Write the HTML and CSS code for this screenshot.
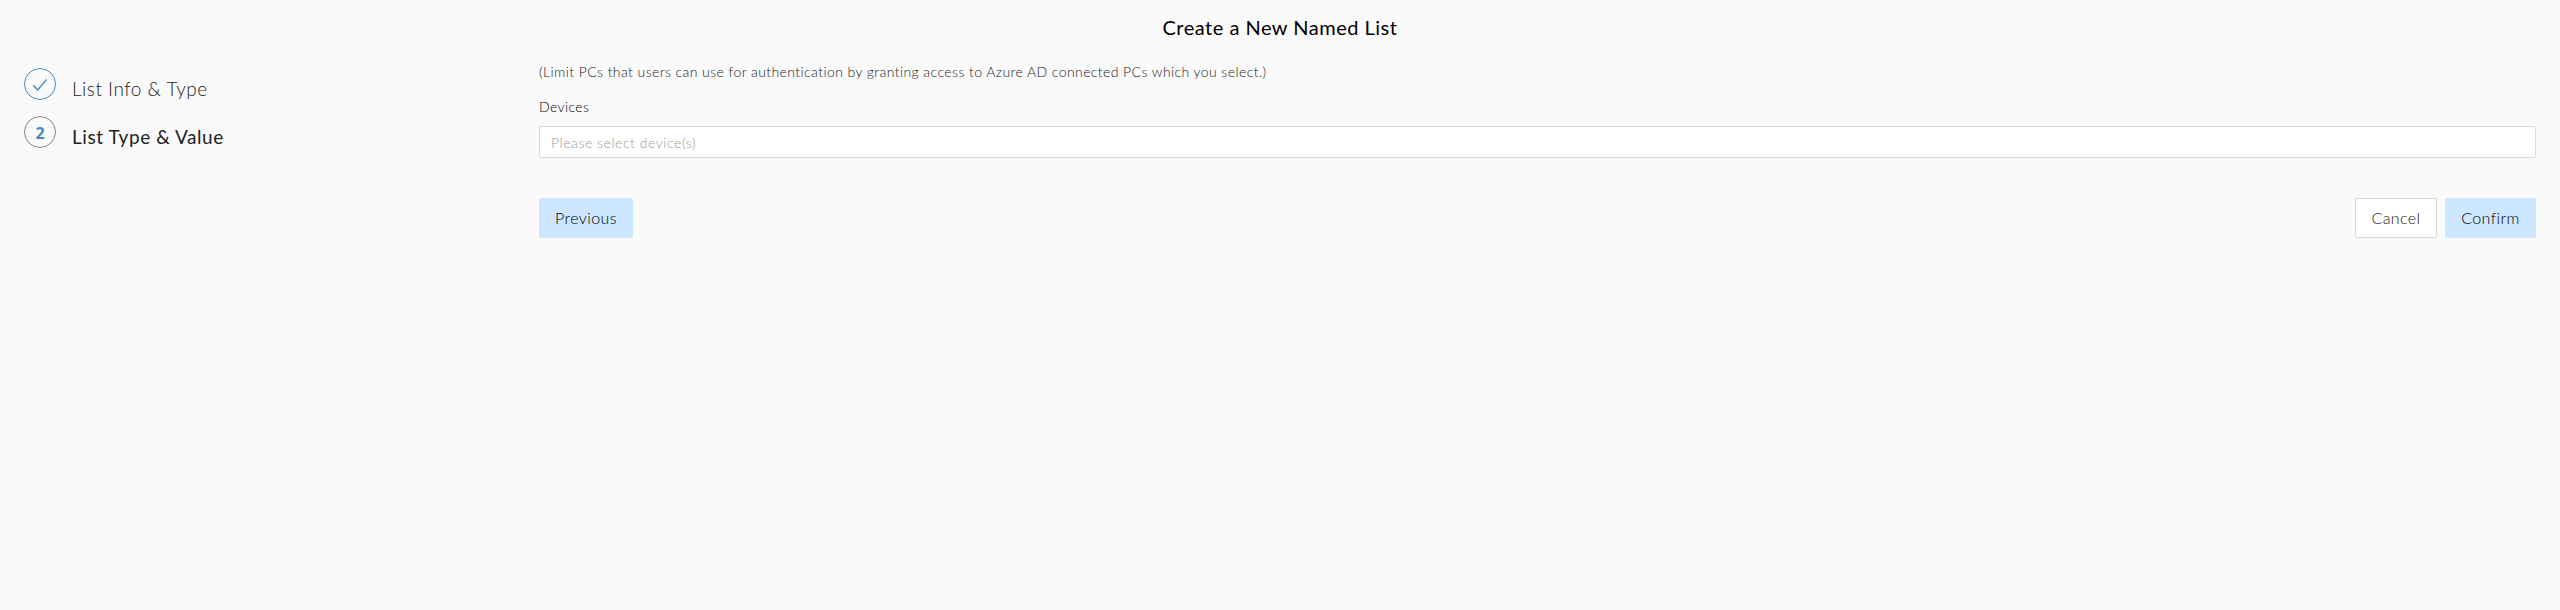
FILE: index.html
```html
<!DOCTYPE html>
<html lang="en">
<head>
<meta charset="utf-8">
<title>Create a New Named List</title>
<link rel="stylesheet" href="styles.css">
</head>
<body>
<h1 class="title"><span>Create a New Named List</span></h1>
<div class="layout">
  <ol class="steps">
    <li class="step step-done">
      <span class="marker"><svg width="16" height="14" viewBox="0 0 16 14"><path d="M1.2 7.2 5.7 12 14.6 1.4" fill="none" stroke="currentColor" stroke-width="1.4"/></svg></span>
      <span class="step-label">List Info &amp; Type</span>
    </li>
    <li class="step step-active">
      <span class="marker">2</span>
      <span class="step-label">List Type &amp; Value</span>
    </li>
  </ol>
  <main class="form">
    <p class="hint"><span>(Limit PCs that users can use for authentication by granting access to Azure AD connected PCs which you select.)</span></p>
    <label class="label" for="devices"><span>Devices</span></label>
    <div class="select" id="devices"><span>Please select device(s)</span></div>
    <div class="actions">
      <button class="btn btn-primary btn-previous">Previous</button>
      <button class="btn btn-cancel">Cancel</button>
      <button class="btn btn-primary btn-confirm">Confirm</button>
    </div>
  </main>
</div>
</body>
</html>
```
FILE: styles.css
```css
* { box-sizing: border-box; }
body {
  margin: 0;
  min-height: 610px;
  background: #fafafa;
  font-family: Lato, "Open Sans", sans-serif;
  font-weight: 300;
  color: #222;
}
.title {
  margin: 0;
  height: 60px;
  padding-top: 12px;
  text-align: center;
  font-size: 20px;
  line-height: 31px;
  font-weight: 400;
  letter-spacing: 0.5px;
  color: #000;
}
.layout { display: flex; padding: 0 24px; }
.steps {
  flex: 0 0 515px;
  margin: 0;
  padding: 8px 0 0;
  list-style: none;
  display: flex;
  flex-direction: column;
  gap: 16px;
}
.step { display: flex; height: 32px; }
.marker {
  width: 32px;
  height: 32px;
  margin-right: 16px;
  border: 1px solid #888;
  border-radius: 50%;
  display: flex;
  align-items: center;
  justify-content: center;
  font: 700 16px/30px "Open Sans", sans-serif;
  color: #428bca;
}
.marker { padding-top: 1px; }
.step-done .marker { border-color: #428bca; }
.step-label {
  font-size: 19px;
  line-height: 32px;
  padding-top: 5px;
  white-space: nowrap;
  letter-spacing: 0.5px;
}
.step-active .step-label { font-weight: 400; letter-spacing: 0.56px; }
.form { flex: 1; }
.hint {
  margin: 0;
  padding-top: 1px;
  font-size: 14px;
  line-height: 22px;
  letter-spacing: 0.415px;
}
.label {
  display: block;
  margin-top: 13px;
  font-size: 14px;
  line-height: 22px;
  letter-spacing: 0.4px;
  color: #000;
}
.select {
  height: 32px;
  margin: 8px 0 40px;
  padding: 0 11px;
  border: 1px solid #d9d9d9;
  border-radius: 2px;
  background: #fff;
  font-size: 14px;
  line-height: 31px;
  letter-spacing: 0.55px;
  color: #999;
}
.actions { display: flex; gap: 8px; }
.btn {
  height: 40px;
  padding: 0;
  border: 1px solid #cce7ff;
  border-radius: 2px;
  font: 300 16px/38px Lato, sans-serif;
  letter-spacing: 0.4px;
  color: #000;
}
.btn-primary { background: #cce7ff; }
.btn-previous { width: 94px; margin-right: auto; }
.btn-cancel { width: 82px; background: #fff; border-color: #d9d9d9; color: #222; }
.btn-confirm { width: 91px; }
```
